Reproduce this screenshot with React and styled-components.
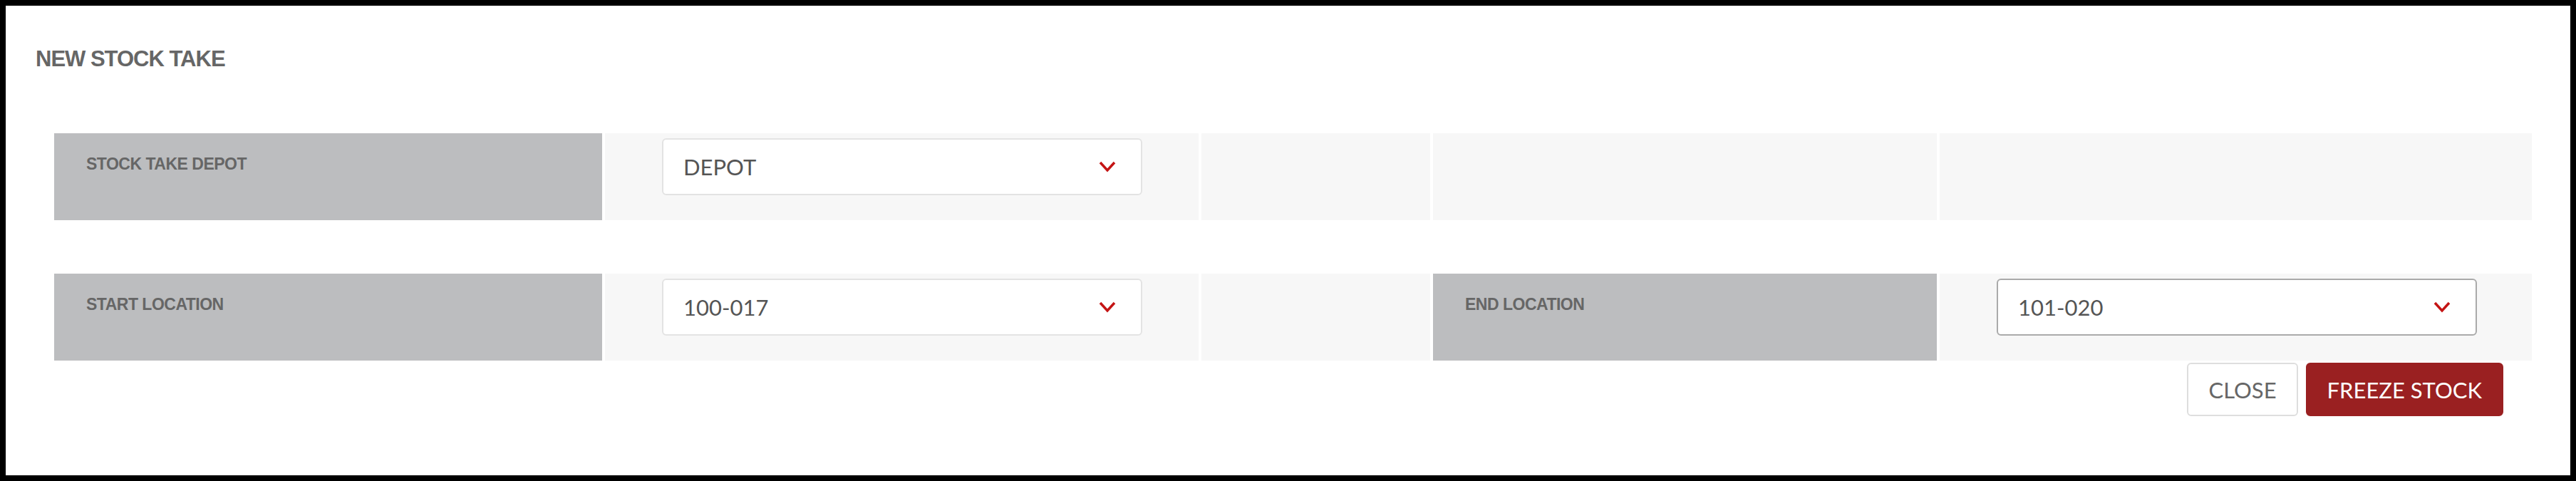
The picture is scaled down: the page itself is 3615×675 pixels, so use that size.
import React from "react";
import styled, { createGlobalStyle } from "styled-components";

const GlobalStyle = createGlobalStyle`
  html, body {
    margin: 0;
    padding: 0;
    background: #000;
  }
  * {
    box-sizing: border-box;
  }
`;

const StyledFrame = styled.div`
  margin: 8px;
  height: 659px;
  background: #fff;
  padding: 59px 54px 0 42px;
`;

const StyledTitle = styled.h1`
  margin: 0;
  font-family: "Liberation Sans", Arial, sans-serif;
  font-size: 31px;
  line-height: 1;
  font-weight: 700;
  letter-spacing: -1px;
  color: #666;
  text-transform: uppercase;
`;

const StyledForm = styled.div`
  margin: 89px 0 0 26px;
  width: 3477px;
  display: flex;
  flex-direction: column;
  gap: 75px;
`;

const StyledRow = styled.div`
  display: grid;
  grid-template-columns: 769px 833px 321px 707px 831px;
  column-gap: 4px;
  height: 122px;
`;

const StyledCell = styled.div`
  background: ${({ label }) => (label ? "#bcbdbf" : "#f7f7f7")};
  padding: ${({ label }) => (label ? "32px 0 0 45px" : "7px 0 0 80px")};
`;

const StyledLabel = styled.span`
  font-family: "Liberation Sans", Arial, sans-serif;
  font-size: 23px;
  line-height: 1;
  font-weight: 700;
  letter-spacing: -0.5px;
  color: #666;
  text-transform: uppercase;
`;

const StyledSelect = styled.div`
  width: 674px;
  height: 80px;
  display: flex;
  align-items: center;
  justify-content: space-between;
  padding: 0 35px 0 28px;
  background: #fff;
  border: 2px solid ${({ active }) => (active ? "#aaa" : "#e3e3e3")};
  border-radius: 6px;
  font-family: Lato, "Liberation Sans", sans-serif;
  font-size: 31px;
  color: #555;
`;

const StyledFooter = styled.div`
  margin-top: -72px;
  display: flex;
  justify-content: flex-end;
  gap: 11px;
  padding-right: 40px;
`;

const StyledButton = styled.button`
  height: 75px;
  padding: 0 ${({ primary }) => (primary ? "28px" : "28px")};
  border: 2px solid ${({ primary }) => (primary ? "#9a2021" : "#dedede")};
  border-radius: 6px;
  background: ${({ primary }) => (primary ? "#9a2021" : "#fff")};
  color: ${({ primary }) => (primary ? "#fff" : "#666")};
  font-family: Lato, "Liberation Sans", sans-serif;
  font-size: 31px;
  text-transform: uppercase;
  cursor: pointer;
`;

const Chevron = () => (
  <svg width="24" height="16" viewBox="0 0 24 16">
    <polyline
      points="2,2 12,13 22,2"
      fill="none"
      stroke="#c41414"
      strokeWidth="3.5"
    />
  </svg>
);

const Select = ({ value, active }) => (
  <StyledSelect active={active}>
    <span>{value}</span>
    <Chevron />
  </StyledSelect>
);

const App = () => {
  return (
    <>
      <GlobalStyle />
      <StyledFrame>
        <StyledTitle>New Stock Take</StyledTitle>
        <StyledForm>
          <StyledRow>
            <StyledCell label>
              <StyledLabel>Stock Take Depot</StyledLabel>
            </StyledCell>
            <StyledCell>
              <Select value="DEPOT" />
            </StyledCell>
            <StyledCell />
            <StyledCell />
            <StyledCell />
          </StyledRow>
          <StyledRow>
            <StyledCell label>
              <StyledLabel>Start Location</StyledLabel>
            </StyledCell>
            <StyledCell>
              <Select value="100-017" />
            </StyledCell>
            <StyledCell />
            <StyledCell label>
              <StyledLabel>End Location</StyledLabel>
            </StyledCell>
            <StyledCell>
              <Select value="101-020" active />
            </StyledCell>
          </StyledRow>
          <StyledFooter>
            <StyledButton>Close</StyledButton>
            <StyledButton primary>Freeze Stock</StyledButton>
          </StyledFooter>
        </StyledForm>
      </StyledFrame>
    </>
  );
};

export default App;
